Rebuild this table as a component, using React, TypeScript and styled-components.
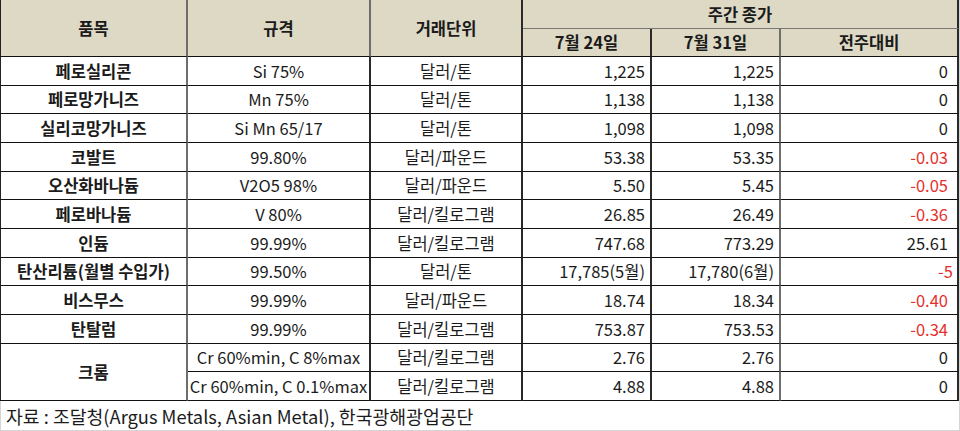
import React from 'react';
import styled, { createGlobalStyle } from 'styled-components';

const Global = createGlobalStyle`
  html, body { margin: 0; padding: 0; background: #fff; }
  body { font-family: "Noto Sans CJK KR", "Noto Sans", sans-serif; }
`;

type Row = {
  name?: string;
  nameSpan?: number;
  spec: string;
  unit: string;
  a: string;
  b: string;
  diff: string;
};

const rows: Row[] = [
  { name: '페로실리콘', spec: 'Si 75%', unit: '달러/톤', a: '1,225', b: '1,225', diff: '0' },
  { name: '페로망가니즈', spec: 'Mn 75%', unit: '달러/톤', a: '1,138', b: '1,138', diff: '0' },
  { name: '실리코망가니즈', spec: 'Si Mn 65/17', unit: '달러/톤', a: '1,098', b: '1,098', diff: '0' },
  { name: '코발트', spec: '99.80%', unit: '달러/파운드', a: '53.38', b: '53.35', diff: '-0.03' },
  { name: '오산화바나듐', spec: 'V2O5 98%', unit: '달러/파운드', a: '5.50', b: '5.45', diff: '-0.05' },
  { name: '페로바나듐', spec: 'V 80%', unit: '달러/킬로그램', a: '26.85', b: '26.49', diff: '-0.36' },
  { name: '인듐', spec: '99.99%', unit: '달러/킬로그램', a: '747.68', b: '773.29', diff: '25.61' },
  { name: '탄산리튬(월별 수입가)', spec: '99.50%', unit: '달러/톤', a: '17,785(5월)', b: '17,780(6월)', diff: '-5' },
  { name: '비스무스', spec: '99.99%', unit: '달러/파운드', a: '18.74', b: '18.34', diff: '-0.40' },
  { name: '탄탈럼', spec: '99.99%', unit: '달러/킬로그램', a: '753.87', b: '753.53', diff: '-0.34' },
  { name: '크롬', nameSpan: 2, spec: 'Cr 60%min, C 8%max', unit: '달러/킬로그램', a: '2.76', b: '2.76', diff: '0' },
  { spec: 'Cr 60%min, C 0.1%max', unit: '달러/킬로그램', a: '4.88', b: '4.88', diff: '0' },
];

const Frame = styled.div`
  width: 960px;
  height: 431px;
  box-sizing: border-box;
  border-right: 1px solid #d4d4d4;
  border-bottom: 1px solid #d4d4d4;
  display: flex;
  flex-direction: column;
`;

const Table = styled.div`
  display: grid;
  grid-template-columns: 188px 183px 152px 129px 129px 1fr;
  grid-template-rows: 29px 28px repeat(12, minmax(0, 1fr));
  height: 401px;
  flex: none;
`;

const Cell = styled.div<{ $align?: 'left' | 'center' | 'right'; $head?: boolean; $bold?: boolean; $red?: boolean; $first?: boolean; $pr?: number; $soft?: boolean }>`
  display: flex;
  align-items: center;
  justify-content: ${p => (p.$align === 'right' ? 'flex-end' : p.$align === 'left' ? 'flex-start' : 'center')};
  padding-right: ${p => (p.$align === 'right' ? `${p.$pr ?? 5}px` : '0')};
  background: ${p => (p.$head ? '#ddd9c4' : '#fff')};
  border-bottom: 1px solid #111;
  border-right: 2px solid ${p => (p.$soft ? '#6e6e6e' : '#2a2a2a')};
  border-left: ${p => (p.$first ? '1px solid #222' : 'none')};
  font-size: 16.5px;
  line-height: 1;
  font-weight: ${p => (p.$head || p.$bold ? 700 : 400)};
  color: ${p => (p.$red ? '#e5302e' : '#1b1b1b')};
  white-space: nowrap;
  overflow: hidden;
`;

const Footer = styled.div`
  flex: 1;
  display: flex;
  align-items: center;
  padding-left: 5px;
  font-size: 18.3px;
  color: #1b1b1b;
  border-left: 1px solid #d4d4d4;
`;

export default function App() {
  return (
    <>
      <Global />
      <Frame>
        <Table>
          <Cell $head $first $soft style={{ gridRow: 'span 2' }}>품목</Cell>
          <Cell $head $soft style={{ gridRow: 'span 2' }}>규격</Cell>
          <Cell $head style={{ gridRow: 'span 2' }}>거래단위</Cell>
          <Cell $head style={{ gridColumn: 'span 3', borderBottomColor: '#777' }}>주간 종가</Cell>
          <Cell $head>7월 24일</Cell>
          <Cell $head $soft>7월 31일</Cell>
          <Cell $head>전주대비</Cell>
          {rows.map((r, i) => (
            <React.Fragment key={i}>
              {r.name && (
                <Cell $first $bold $soft style={r.nameSpan ? { gridRow: `span ${r.nameSpan}` } : undefined}>
                  {r.name}
                </Cell>
              )}
              <Cell>{r.spec}</Cell>
              <Cell>{r.unit}</Cell>
              <Cell $align="right">{r.a}</Cell>
              <Cell $align="right" $soft>{r.b}</Cell>
              <Cell $align="right" $pr={r.diff === '-5' ? 4 : 9} $red={r.diff.startsWith('-')}>{r.diff}</Cell>
            </React.Fragment>
          ))}
        </Table>
        <Footer>자료 : 조달청(Argus Metals, Asian Metal), 한국광해광업공단</Footer>
      </Frame>
    </>
  );
}
